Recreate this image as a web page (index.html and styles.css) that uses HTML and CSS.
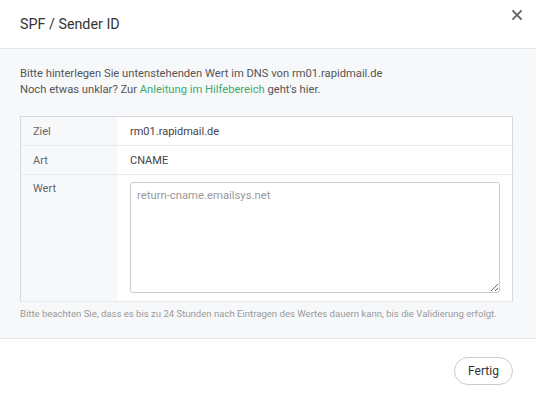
FILE: index.html
```html
<!DOCTYPE html>
<html lang="de">
<head>
  <meta charset="UTF-8">
  <meta name="viewport" content="width=device-width, initial-scale=1.0">
  <title>SPF / Sender ID</title>
  <link rel="stylesheet" href="styles.css">
</head>
<body>
  <div class="modal">
    <div class="modal-header">
      <h3 class="modal-title">SPF / Sender ID</h3>
      <button class="close" aria-label="Schließen">
        <svg width="10" height="10" viewBox="0 0 10 10">
          <path d="M1 1 L9 9 M9 1 L1 9" stroke="#666" stroke-width="1.8" stroke-linecap="square"/>
        </svg>
      </button>
    </div>

    <div class="modal-body">
      <p class="intro">
        Bitte hinterlegen Sie untenstehenden Wert im DNS von rm01.rapidmail.de<br>
        Noch etwas unklar? Zur <a href="#">Anleitung im Hilfebereich</a> geht's hier.
      </p>

      <table class="dns-table">
        <tr>
          <th>Ziel</th>
          <td>rm01.rapidmail.de</td>
        </tr>
        <tr>
          <th>Art</th>
          <td>CNAME</td>
        </tr>
        <tr class="value-row">
          <th>Wert</th>
          <td><textarea readonly placeholder="return-cname.emailsys.net"></textarea></td>
        </tr>
      </table>

      <p class="note">Bitte beachten Sie, dass es bis zu 24 Stunden nach Eintragen des Wertes dauern kann, bis die Validierung erfolgt.</p>
    </div>

    <div class="modal-footer">
      <button class="btn">Fertig</button>
    </div>
  </div>
</body>
</html>
```

FILE: styles.css
```css
body {
  margin: 0;
  font-family: Roboto, "Liberation Sans", Arial, sans-serif;
  background: #fff;
  color: #555;
}
.modal {
  width: 536px;
}
.modal-header {
  height: 48px;
  padding: 0 14px 0 20px;
  display: flex;
  align-items: center;
  justify-content: space-between;
  border-bottom: 1px solid #e3e5e8;
}
.modal-title {
  margin: 0;
  font-size: 14.3px;
  font-weight: 400;
  color: #333;
}
.close {
  background: none;
  border: none;
  padding: 0;
  width: 10px;
  height: 10px;
  margin-bottom: 18px;
  cursor: pointer;
  display: flex;
}
.modal-body {
  background: #f7f8fa;
  padding: 17px 23px 0 20px;
  height: 290px;
  box-sizing: border-box;
  border-bottom: 1px solid #e3e5e8;
}
.intro {
  margin: 0 0 18px;
  font-size: 11.2px;
  line-height: 16px;
  color: #555;
}
.intro a {
  color: #3dab6e;
  text-decoration: none;
}
.dns-table {
  width: 100%;
  border-collapse: collapse;
  border: 1px solid #d5d8dc;
  background: #fff;
  font-size: 11px;
}
.dns-table th,
.dns-table td {
  height: 28px;
  padding: 0 12px;
  text-align: left;
  border-bottom: 1px solid #e8eaed;
}
.dns-table th {
  width: 72px;
  font-weight: 400;
  color: #666;
  background: #f7f8fa;
}
.dns-table td {
  color: #444;
  padding-left: 13px;
}
.value-row th {
  vertical-align: top;
  padding-top: 7px;
}
.value-row td {
  padding-top: 7px;
  padding-bottom: 8px;
}
textarea {
  display: block;
  width: 100%;
  height: 111px;
  box-sizing: border-box;
  border: 1px solid #ccc;
  border-radius: 3px;
  padding: 6px 6px;
  font-family: Roboto, "Liberation Sans", Arial, sans-serif;
  font-size: 11.3px;
  resize: vertical;
}
textarea::placeholder {
  color: #999;
}
.note {
  margin: 6px 0 0;
  font-size: 9.55px;
  color: #999;
}
.modal-footer {
  display: flex;
  justify-content: flex-end;
  padding: 18px 23px 0 20px;
}
.btn {
  height: 28px;
  width: 59px;
  border: 1px solid #ccc;
  border-radius: 14px;
  background: #fff;
  color: #333;
  font-family: Roboto, "Liberation Sans", Arial, sans-serif;
  font-size: 12px;
  cursor: pointer;
}
```
